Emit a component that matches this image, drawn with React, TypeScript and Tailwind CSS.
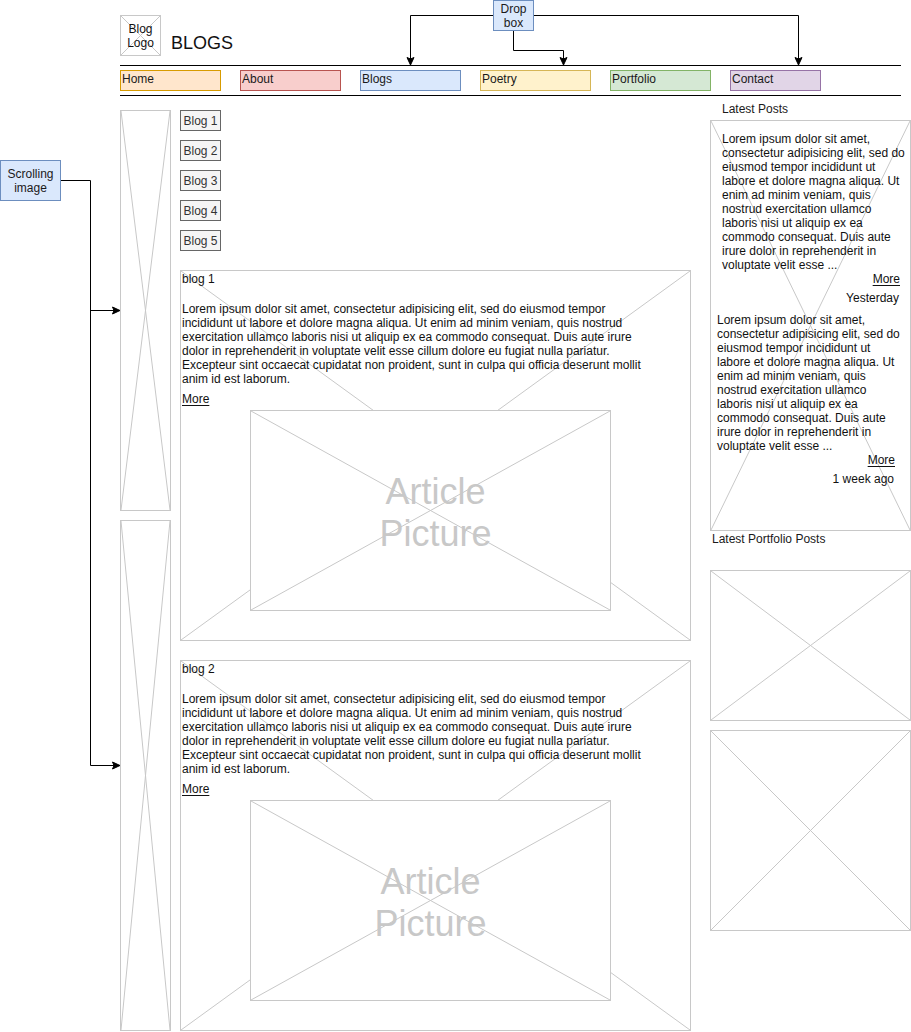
import React from "react";

const XLines = () => (
  <svg className="pointer-events-none absolute inset-0 h-full w-full" aria-hidden="true">
    <line x1="0" y1="0" x2="100%" y2="100%" stroke="#c8c8c8" strokeWidth="1" />
    <line x1="100%" y1="0" x2="0" y2="100%" stroke="#c8c8c8" strokeWidth="1" />
  </svg>
);

const Placeholder = ({ className = "", children }: { className?: string; children?: React.ReactNode }) => (
  <div className={"relative border border-[#c8c8c8] bg-white " + className}>
    <XLines />
    {children}
  </div>
);

const navItems = [
  { label: "Home", cls: "w-[101px] bg-[#ffe6cc] border-[#d79b00]" },
  { label: "About", cls: "w-[101px] bg-[#f8cecc] border-[#b85450]" },
  { label: "Blogs", cls: "w-[101px] bg-[#dae8fc] border-[#6c8ebf]" },
  { label: "Poetry", cls: "w-[111px] bg-[#fff2cc] border-[#d6b656]" },
  { label: "Portfolio", cls: "w-[101px] bg-[#d5e8d4] border-[#82b366]" },
  { label: "Contact", cls: "w-[91px] bg-[#e1d5e7] border-[#9673a6]" },
];

const lorem = [
  "Lorem ipsum dolor sit amet, consectetur adipisicing elit, sed do eiusmod tempor",
  "incididunt ut labore et dolore magna aliqua. Ut enim ad minim veniam, quis nostrud",
  "exercitation ullamco laboris nisi ut aliquip ex ea commodo consequat. Duis aute irure",
  "dolor in reprehenderit in voluptate velit esse cillum dolore eu fugiat nulla pariatur.",
  "Excepteur sint occaecat cupidatat non proident, sunt in culpa qui officia deserunt mollit",
  "anim id est laborum.",
];

const sideLorem = [
  "Lorem ipsum dolor sit amet,",
  "consectetur adipisicing elit, sed do",
  "eiusmod tempor incididunt ut",
  "labore et dolore magna aliqua. Ut",
  "enim ad minim veniam, quis",
  "nostrud exercitation ullamco",
  "laboris nisi ut aliquip ex ea",
  "commodo consequat. Duis aute",
  "irure dolor in reprehenderit in",
  "voluptate velit esse ...",
];

const BlogCard = ({ title, picPad }: { title: string; picPad: string }) => (
  <Placeholder className="mt-[19px] h-[371px] w-[511px]">
    <div className="relative flex flex-col pl-[1px] pt-[1px]">
      <div className="whitespace-nowrap">{title}</div>
      <div className="mt-[16px] whitespace-nowrap">
        {lorem.map((l) => (
          <div key={l}>{l}</div>
        ))}
      </div>
      <div className="mt-[6px]">
        <span className="underline underline-offset-2">More</span>
      </div>
      <Placeholder className="ml-[68px] mt-[4px] h-[201px] w-[361px]">
        <div
          className={
            "relative flex h-full items-center justify-center pt-[4px] text-center text-[36px] leading-[42px] text-[#c8c8c8] " +
            picPad
          }
        >
          Article
          <br />
          Picture
        </div>
      </Placeholder>
    </div>
  </Placeholder>
);

const SidePost = ({
  padL,
  morePad,
  when,
  whenPad,
  top,
}: {
  padL: string;
  morePad: string;
  when: string;
  whenPad: string;
  top: string;
}) => (
  <div className={"relative flex flex-col " + top}>
    <div className={"whitespace-nowrap " + padL}>
      {sideLorem.map((l) => (
        <div key={l}>{l}</div>
      ))}
    </div>
    <div className={"text-right " + morePad}>
      <span className="underline underline-offset-2">More</span>
    </div>
    <div className={"mt-[5px] text-right " + whenPad}>{when}</div>
  </div>
);

export default function App() {
  return (
    <div className="relative h-[1032px] w-[911px] overflow-hidden bg-white font-['Liberation_Sans',Arial,sans-serif] text-[12px] leading-[14px] text-[#111]">
      <div className="pl-[120px]">
        <header className="flex items-start pt-[15px]">
          <Placeholder className="h-[41px] w-[41px]">
            <div className="relative flex h-full items-center justify-center text-center leading-[14px]">
              Blog
              <br />
              Logo
            </div>
          </Placeholder>
          <div className="ml-[10px] mt-[18px] text-[18px] leading-[20px]">BLOGS</div>
        </header>

        <nav className="mt-[9px] flex w-[781px] gap-[19px] border-y border-black py-[4px]">
          {navItems.map((n) => (
            <div key={n.label} className={"h-[21px] border pl-[1px] pt-[1px] text-[#1a1a1a] " + n.cls}>
              {n.label}
            </div>
          ))}
        </nav>

        <main className="flex pt-[4px]">
          <div className="flex w-[51px] flex-col gap-[9px] pt-[10px]">
            <Placeholder className="h-[401px] w-[51px]" />
            <Placeholder className="h-[511px] w-[51px]" />
          </div>

          <div className="ml-[9px] flex w-[511px] flex-col pt-[10px]">
            <div className="flex flex-col gap-[9px]">
              {["Blog 1", "Blog 2", "Blog 3", "Blog 4", "Blog 5"].map((b) => (
                <div
                  key={b}
                  className="h-[21px] w-[41px] border border-[#666666] bg-[#f5f5f5] pt-[3px] text-center text-[#333333]"
                >
                  {b}
                </div>
              ))}
            </div>
            <BlogCard title="blog 1" picPad="pl-[10px]" />
            <BlogCard title="blog 2" picPad="" />
          </div>

          <div className="ml-[19px] flex w-[201px] flex-col">
            <div className="h-[20px] pl-[12px] pt-[1px] leading-[16px] text-[#1a1a1a]">Latest Posts</div>
            <Placeholder className="h-[411px] w-[201px]">
              <SidePost top="pt-[11px]" padL="pl-[11px]" morePad="pr-[10px]" when="Yesterday" whenPad="pr-[11px]" />
              <SidePost top="mt-[8px]" padL="pl-[6px]" morePad="pr-[15px]" when="1 week ago" whenPad="pr-[16px]" />
            </Placeholder>
            <div className="pl-[2px] leading-[16px] text-[#1a1a1a]">Latest Portfolio Posts</div>
            <Placeholder className="mt-[23px] h-[151px] w-[201px]" />
            <Placeholder className="mt-[9px] h-[201px] w-[201px]" />
          </div>
        </main>
      </div>

      {/* annotation connectors */}
      <svg className="pointer-events-none absolute left-0 top-0 h-[1032px] w-[911px]" aria-hidden="true">
        <g fill="none" stroke="#000" strokeWidth="1">
          <path d="M493 15.5 H410.5 V59" />
          <path d="M534 15.5 H798.5 V59" />
          <path d="M513.5 31 V50.5 H563.5 V59" />
          <path d="M61 180.5 H90.5 V765.5 H114" />
          <path d="M90.5 310.5 H114" />
        </g>
        <g fill="#000" stroke="#000" strokeWidth="1" strokeLinejoin="miter">
          <path d="M410.5 65 L407 57.5 L410.5 59 L414 57.5 Z" />
          <path d="M798.5 65 L795 57.5 L798.5 59 L802 57.5 Z" />
          <path d="M563.5 65 L560 57.5 L563.5 59 L567 57.5 Z" />
          <path d="M120 310.5 L112.5 307 L114 310.5 L112.5 314 Z" />
          <path d="M120 765.5 L112.5 762 L114 765.5 L112.5 769 Z" />
        </g>
      </svg>

      <div className="absolute left-[493px] top-0 flex h-[31px] w-[41px] items-center justify-center border border-[#6c8ebf] bg-[#dae8fc] text-center leading-[14px] text-[#1a1a1a]">
        Drop
        <br />
        box
      </div>
      <div className="absolute left-0 top-[160px] flex h-[41px] w-[61px] items-center justify-center border border-[#6c8ebf] bg-[#dae8fc] text-center leading-[14px] text-[#1a1a1a]">
        Scrolling
        <br />
        image
      </div>
    </div>
  );
}
